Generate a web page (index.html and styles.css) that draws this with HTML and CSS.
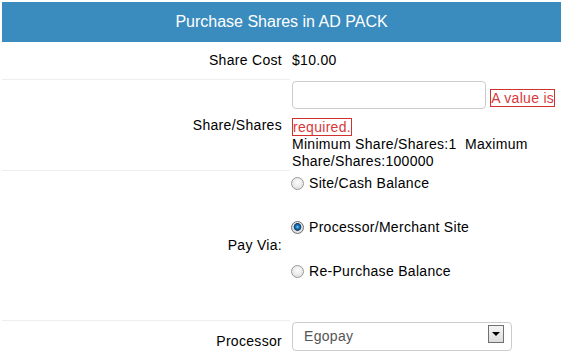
FILE: index.html
```html
<!DOCTYPE html>
<html lang="en">

<head>
    <meta charset="UTF-8">
    <meta name="viewport" content="width=device-width, initial-scale=1.0">
    <title>Purchase Shares</title>
    <link rel="stylesheet" href="styles.css">
</head>

<body>
    <div class="panel">
        <div class="panel-heading">Purchase Shares in AD PACK</div>

        <div class="form-row row-cost">
            <div class="label">Share Cost</div>
            <div class="value">$10.00</div>
        </div>

        <div class="form-row row-shares">
            <div class="label">Share/Shares</div>
            <div class="value">
                <input type="text" class="text-input"> <span class="error">A value is required.</span>
                <div class="hint">Minimum Share/Shares:1&nbsp; Maximum Share/Shares:100000</div>
            </div>
        </div>

        <div class="form-row row-pay">
            <div class="label">Pay Via:</div>
            <div class="value">
                <label class="option"><input type="radio" name="payvia" class="radio">Site/Cash Balance</label>
                <label class="option"><input type="radio" name="payvia" class="radio" checked>Processor/Merchant Site</label>
                <label class="option"><input type="radio" name="payvia" class="radio">Re-Purchase Balance</label>
            </div>
        </div>

        <div class="form-row row-processor">
            <div class="label">Processor</div>
            <div class="value">
                <div class="select-wrap">
                    <select class="select">
                        <option>Egopay</option>
                    </select>
                    <span class="select-btn"></span>
                </div>
            </div>
        </div>
    </div>
</body>

</html>
```

FILE: styles.css
```css
body {
    margin: 0;
    padding: 2px;
    font-family: "Liberation Sans", Arial, sans-serif;
    font-size: 14px;
    line-height: 17px;
    color: #000;
    background-color: #fff;
}

.panel {
    width: 559px;
}

.panel-heading {
    height: 40px;
    line-height: 40px;
    background-color: #3a8bbe;
    color: #fff;
    font-size: 16px;
    text-align: center;
}

.form-row {
    display: grid;
    grid-template-columns: 288px 1fr;
    letter-spacing: 0.3px;
}

.label {
    display: flex;
    align-items: center;
    justify-content: flex-end;
    padding-right: 8px;
}

.form-row + .form-row .label {
    border-top: 1px solid #eee;
}

.value {
    padding: 0 6px 0 2px;
}

.row-cost .value {
    padding-top: 10px;
    padding-bottom: 10px;
}

/* share amount */
.row-shares .value {
    padding-top: 2px;
}

.text-input {
    box-sizing: border-box;
    width: 194px;
    height: 28px;
    margin: 0 0 10px 0;
    padding: 0 8px;
    border: 1px solid #ccc;
    border-radius: 4px;
    font-family: inherit;
    font-size: 14px;
    vertical-align: 3px;
}

.error {
    color: #d9383a;
    border: 1px solid #d0312f;
    -webkit-box-decoration-break: clone;
    box-decoration-break: clone;
}

/* pay via */
.row-pay .value {
    display: flex;
    flex-direction: column;
    gap: 27px;
    padding-top: 5px;
    padding-bottom: 40px;
}

.option {
    display: flex;
    align-items: center;
    height: 17px;
}

.radio {
    appearance: none;
    -webkit-appearance: none;
    box-sizing: border-box;
    width: 13px;
    height: 13px;
    margin: 0 5px 0 -1px;
    border: 1px solid #9a9a9a;
    border-radius: 50%;
    background: radial-gradient(circle at 50% 40%, #fdfdfd 0, #e9e9e9 55%, #d4d4d4 100%);
}

.radio:checked {
    border-color: #6f6f6f;
    background: radial-gradient(circle at 50% 45%, #7fd0ff 0, #1c7fc8 1.5px, #0d4f86 3px, #2d4a66 3.6px, #e6e6e6 4.2px, #d0d0d0 100%);
}

/* processor */
.row-processor .value {
    padding-top: 2px;
    padding-bottom: 11px;
}

.select-wrap {
    position: relative;
    width: 220px;
}

.select {
    appearance: none;
    -webkit-appearance: none;
    box-sizing: border-box;
    display: block;
    width: 220px;
    height: 29px;
    padding: 0 0 2px 11px;
    border: 1px solid #ccc;
    border-radius: 4px;
    background-color: #fff;
    color: #555;
    font-family: inherit;
    font-size: 14px;
    letter-spacing: 0.3px;
}

.select-btn {
    position: absolute;
    top: 3px;
    right: 8px;
    box-sizing: border-box;
    width: 16px;
    height: 18px;
    border: 1px solid #707070;
    background: linear-gradient(#f4f4f4, #dcdcdc);
}

.select-btn::after {
    content: "";
    position: absolute;
    left: 3px;
    top: 6px;
    border-left: 4px solid transparent;
    border-right: 4px solid transparent;
    border-top: 4px solid #000;
}
```
